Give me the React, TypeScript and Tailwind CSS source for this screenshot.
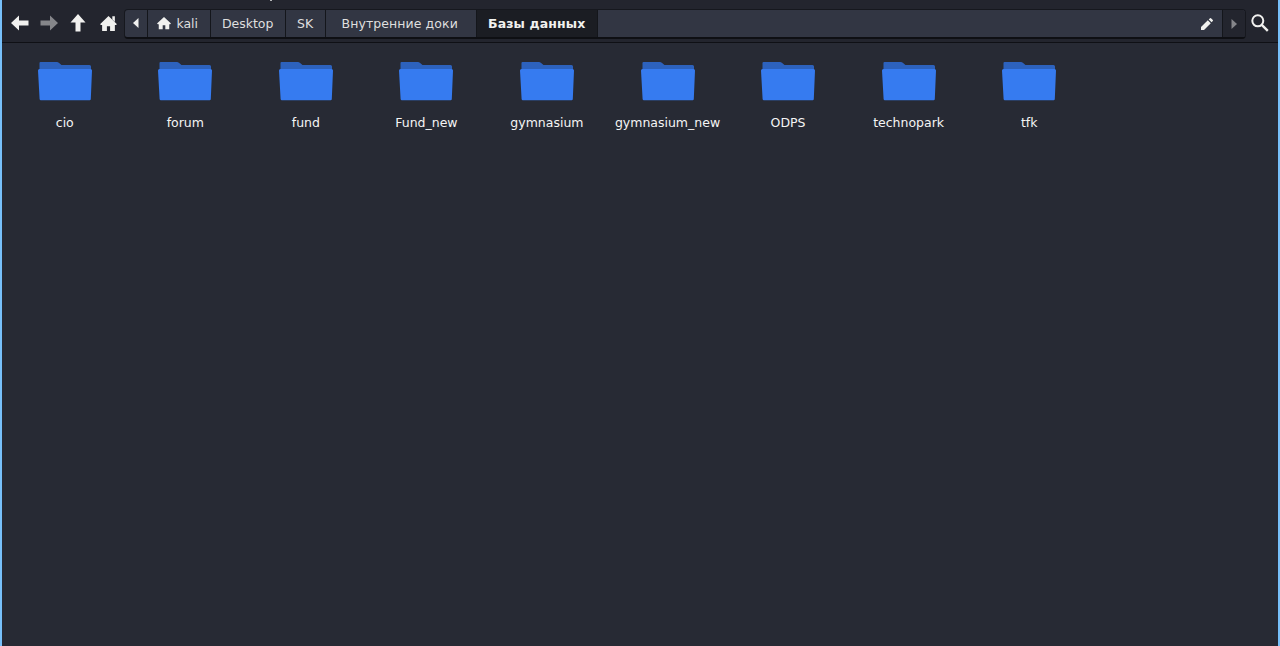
import React from 'react';

const folders = ['cio', 'forum', 'fund', 'Fund_new', 'gymnasium', 'gymnasium_new', 'ODPS', 'technopark', 'tfk'];

const HomeIcon: React.FC<{ size: number; chimney?: boolean }> = ({ size, chimney }) => (
  <svg width={size} height={size} viewBox="0 0 16 16" fill="#f1f1ef" className="shrink-0">
    <path d="M8 1 0 8.600l1 .9 1-.2V15h4.500v-4.500h3V15H14V9.300l1 .2 1-.9z" />
    {chimney && <path d="M11.600 1.200H14v5.300l-2.400-2.300z" />}
  </svg>
);

const FolderIcon: React.FC = () => (
  <svg width="56" height="40" viewBox="0 0 56 40">
    <path d="M2.500 2Q2.500 1 3.500 1H20q1 0 1.800.8L24.500 4H52.500q1.500 0 1.500 1.500V12H2.500z" fill="#2d62bd" />
    <path d="M1 9.500Q1 8 2.500 8H53.500q1.500 0 1.500 1.500L53.800 38q0 1.200-1.200 1.200H3.900Q2.700 39.200 2.600 38z" fill="#367bf0" />
  </svg>
);

interface NavButtonProps {
  label: string;
  children: React.ReactNode;
}

const NavButton: React.FC<NavButtonProps> = ({ label, children }) => (
  <button aria-label={label} className="w-[29.3px] h-7 flex items-center justify-center shrink-0">
    {children}
  </button>
);

interface CrumbProps {
  className: string;
  children: React.ReactNode;
}

const Crumb: React.FC<CrumbProps> = ({ className, children }) => (
  <button
    className={`h-full shrink-0 flex items-center justify-center whitespace-nowrap border-r border-[#14161b] ${className}`}
  >
    {children}
  </button>
);

const PathBar: React.FC = () => (
  <div className="w-[1122px] h-[30px] flex shrink-0 rounded border border-[#16181e] border-b-2 border-b-[#0e0f13] bg-[#323643] overflow-hidden">
    <Crumb className="w-[23px] pr-px pb-px">
      <svg width="6" height="10" viewBox="0 0 6 10" fill="#f1f1ef">
        <path d="M5.500 0v10L0 5z" />
      </svg>
    </Crumb>
    <Crumb className="w-[63px] gap-[5px] pr-[3px]">
      <span className="pb-px">
        <HomeIcon size={14} />
      </span>
      kali
    </Crumb>
    <Crumb className="w-[75px] pr-px">Desktop</Crumb>
    <Crumb className="w-[40px] pr-px">SK</Crumb>
    <Crumb className="w-[151px] pr-[3px] tracking-[0.08px]">Внутренние доки</Crumb>
    <Crumb className="w-[121px] pr-px bg-[#1b1d23] font-bold text-[#f1f1ef] tracking-[0.12px]">Базы данных</Crumb>
    <div className="flex-1 flex items-center justify-end pr-[9px] border-r border-[#14161b]">
      <svg width="12" height="12" viewBox="0 0 12 12" fill="#f1f1ef">
        <path d="M0 12V9l6.800-6.800 3 3L3 12zM7.700 1.400 9 .2q.5-.4 1 0L11.800 2q.4.500 0 1L10.600 4.300z" />
      </svg>
    </div>
    <button aria-label="Scroll right" className="w-[22px] flex items-center justify-center bg-[#23252e]">
      <svg width="6" height="10" viewBox="0 0 6 10" fill="#85868a">
        <path d="M.5 0v10L6 5z" />
      </svg>
    </button>
  </div>
);

const Toolbar: React.FC = () => (
  <div className="h-[43px] pt-[9px] pl-[3px] flex items-start bg-[#23252e] border-b border-[#0f1015]">
    <NavButton label="Back">
      <svg width="18" height="16" viewBox="0 0 18 16" fill="#f1f1ef">
        <path d="M0 8 8 .5V5.500h9.500v5H8v5z" />
      </svg>
    </NavButton>
    <NavButton label="Forward">
      <svg width="18" height="16" viewBox="0 0 18 16" fill="#85868a">
        <path d="M18 8 10 .5V5.500H.5v5H10v5z" />
      </svg>
    </NavButton>
    <NavButton label="Up">
      <svg width="16" height="18" viewBox="0 0 16 18" fill="#f1f1ef">
        <path d="M8 0 .5 8.500h5v9h5v-9h5z" />
      </svg>
    </NavButton>
    <NavButton label="Home">
      <span className="pl-px pt-px">
        <HomeIcon size={17} chimney />
      </span>
    </NavButton>
    <div className="w-[2px] shrink-0" />
    <PathBar />
    <button aria-label="Search" className="w-7 h-7 flex items-center justify-center shrink-0">
      <svg width="18" height="18" viewBox="0 0 18 18" fill="none" stroke="#f1f1ef" strokeWidth="2">
        <circle cx="6.800" cy="6.800" r="5.500" />
        <path d="m10.800 10.800 6 6" strokeWidth="2.400" />
      </svg>
    </button>
  </div>
);

export default function App() {
  return (
    <div className="relative w-[1280px] h-[646px] overflow-hidden bg-[#272a34] border-x-2 border-[#77c0fa] text-[12.5px] leading-4 text-[#dfdfdf] font-['DejaVu_Sans',sans-serif]">
      <Toolbar />
      {/* descender of the menu label that is scrolled off above the toolbar */}
      <span className="absolute top-0 left-[268px] w-[2px] h-px bg-[#b5b6b8]" />
      <div className="flex pt-[18px] pl-[2.5px]">
        {folders.map((name) => (
          <div key={name} className="w-[120.55px] shrink-0 flex flex-col items-center text-[#f5f5f5]">
            <FolderIcon />
            <span className="mt-3.5">{name}</span>
          </div>
        ))}
      </div>
    </div>
  );
}
